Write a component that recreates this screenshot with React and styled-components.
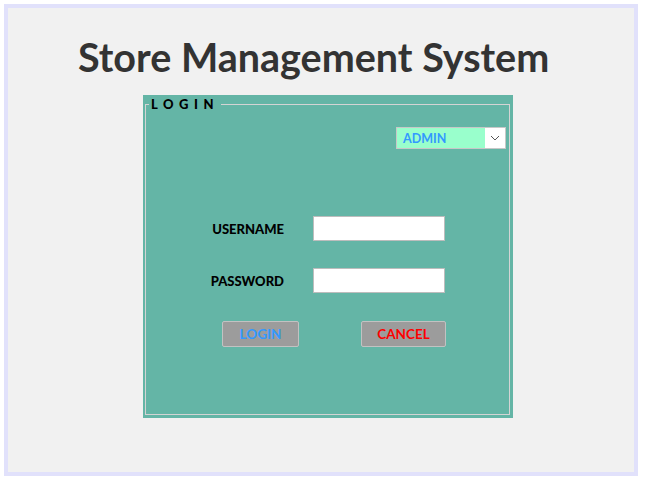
import React from 'react'
import styled, { createGlobalStyle } from 'styled-components'

const GlobalStyle = createGlobalStyle`
    body {
        margin: 0;
        background: #fff;
        font-family: "Lato", "Liberation Sans", sans-serif;
    }
`

function App() {
    return (
        <>
            <GlobalStyle />
            <Frame>
                <Title>Store Management System</Title>
                <Panel>
                    <Box>
                        <Legend>LOGIN</Legend>
                        <RoleRow>
                            <RoleSelect>
                                <span>ADMIN</span>
                                <Arrow>
                                    <svg width="10" height="6" viewBox="0 0 10 6">
                                        <path d="M1 1 L5 5 L9 1" fill="none" stroke="#555" strokeWidth="1" />
                                    </svg>
                                </Arrow>
                            </RoleSelect>
                        </RoleRow>
                        <Form>
                            <Row>
                                <Label>USERNAME</Label>
                                <Input type="text" />
                            </Row>
                            <Row>
                                <Label>PASSWORD</Label>
                                <Input type="password" />
                            </Row>
                            <Buttons>
                                <Button color="#3399ff" width={77}>LOGIN</Button>
                                <Button color="#ff0000" width={85}>CANCEL</Button>
                            </Buttons>
                        </Form>
                    </Box>
                </Panel>
            </Frame>
        </>
    )
}

const Frame = styled.div`
    margin: 4px 0 0 4px;
    width: 626px;
    height: 464px;
    border: 4px solid #e1e1fb;
    background: #f1f1f1;
    padding: 0;
`

const Title = styled.h1`
    margin: 0;
    padding: 27px 0 0 70px;
    font-size: 39.5px;
    line-height: 44px;
    font-weight: 700;
    color: #333;
    height: 87px;
    box-sizing: border-box;
`

const Panel = styled.div`
    margin-left: 135px;
    width: 370px;
    height: 323px;
    background: #64b5a6;
    padding: 2px 3px 3px 2px;
    box-sizing: border-box;
    display: flex;
`

const Box = styled.fieldset`
    flex: 1;
    margin: 0;
    padding: 0 3px 0 3px;
    border: 1px solid #d4d4d4;
    min-width: 0;
`

const Legend = styled.legend`
    margin-left: 0;
    padding: 0 2px;
    font-size: 13px;
    font-weight: 900;
    letter-spacing: 5.5px;
    color: #000;
    line-height: 14px;
`

const RoleRow = styled.div`
    display: flex;
    justify-content: flex-end;
    margin-top: 16px;
`

const RoleSelect = styled.div`
    width: 110px;
    height: 22px;
    box-sizing: border-box;
    border: 1px solid #c8c8c8;
    background: #99ffcc;
    display: flex;
    align-items: center;
    span {
        flex: 1;
        padding-left: 6px;
        color: #3399ff;
        font-size: 12.5px;
        font-weight: 700;
    }
`

const Arrow = styled.div`
    width: 20px;
    height: 100%;
    background: #fff;
    display: flex;
    align-items: center;
    justify-content: center;
`

const Form = styled.div`
    margin-top: 67px;
    display: flex;
    flex-direction: column;
    gap: 27px;
`

const Row = styled.div`
    display: flex;
    align-items: center;
    gap: 29px;
`

const Label = styled.div`
    width: 135px;
    text-align: right;
    font-size: 13px;
    font-weight: 900;
    color: #000;
`

const Input = styled.input`
    width: 132px;
    height: 25px;
    box-sizing: border-box;
    border: 1px solid #bdbdbd;
    background: #fff;
    margin: 0;
    padding: 0 4px;
    outline: none;
`

const Buttons = styled.div`
    display: flex;
    gap: 62px;
    padding-left: 73px;
    margin-top: 1px;
`

const Button = styled.button`
    width: ${p => p.width}px;
    height: 26px;
    background: #9c9c9c;
    border: 1px solid #c2c2c2;
    border-radius: 2px;
    color: ${p => p.color};
    font-family: "Lato", "Liberation Sans", sans-serif;
    font-size: 13.5px;
    font-weight: 700;
    padding: 0;
`

export default App
